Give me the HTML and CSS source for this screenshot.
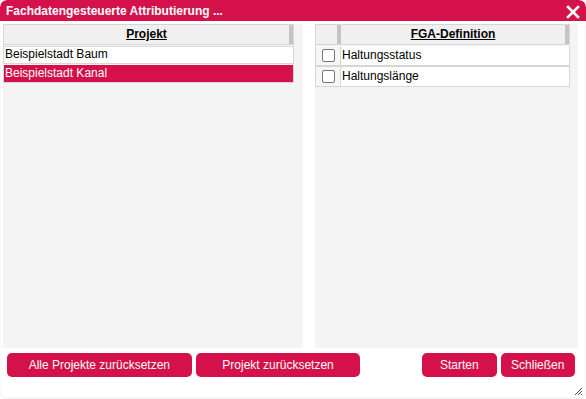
FILE: index.html
```html
<!DOCTYPE html>
<html>
<head>
<meta charset="utf-8">
<link rel="stylesheet" href="styles.css">
</head>
<body>
<div class="dialog">
  <div class="titlebar">
    <span class="title">Fachdatengesteuerte Attributierung ...</span>
    <svg class="close" width="14" height="14" viewBox="0 0 14 14"><path d="M2 2 L12 12 M12 2 L2 12" stroke="#fff" stroke-width="2.6" stroke-linecap="square"/></svg>
  </div>
  <div class="content">
    <div class="panel left">
      <div class="grid">
        <div class="head"><span class="htext">Projekt</span><span class="hbar"></span></div>
        <div class="row">Beispielstadt Baum</div>
        <div class="row sel">Beispielstadt Kanal</div>
      </div>
    </div>
    <div class="panel right">
      <div class="grid2">
        <div class="head2">
          <span class="hcheck"></span><span class="hbar"></span>
          <span class="htext">FGA-Definition</span><span class="hbar"></span>
        </div>
        <div class="row2"><span class="cb"><span class="box"></span></span><span class="lbl">Haltungsstatus</span></div>
        <div class="row2"><span class="cb"><span class="box"></span></span><span class="lbl">Haltungslänge</span></div>
      </div>
    </div>
  </div>
  <div class="buttons">
    <button class="btn b1">Alle Projekte zurücksetzen</button>
    <button class="btn b2">Projekt zurücksetzen</button>
    <span class="spacer"></span>
    <button class="btn b3">Starten</button>
    <button class="btn b4">Schließen</button>
  </div>
  <svg class="grip" width="9" height="9" viewBox="0 0 9 9"><path d="M8 1 L1 8 M8 4 L4 8 M8 7 L7 8" stroke="#444" stroke-width="1"/></svg>
</div>
</body>
</html>
```

FILE: styles.css
```css
html, body {
  margin: 0;
  padding: 0;
  background: #ffffff;
}
body {
  font-family: "Liberation Sans", Arial, sans-serif;
  font-size: 12px;
  color: #000;
}
.dialog {
  position: relative;
  width: 586px;
  height: 399px;
  background: #fff;
  border-radius: 7px;
  overflow: hidden;
  box-shadow: inset 0 -1px 2px rgba(0,0,0,0.08);
  display: flex;
  flex-direction: column;
}
.titlebar {
  height: 21px;
  background: #d4114a;
  display: flex;
  align-items: center;
  padding: 0 8px 0 6px;
  border-radius: 7px 7px 0 0;
}
.title {
  color: #fff;
  font-weight: bold;
  font-size: 12px;
  flex: 1;
  padding-top: 1px;
}
.close {
  display: block;
  margin-top: 2px;
  margin-right: -2px;
}
.content {
  display: flex;
  padding: 3px 8px 0 3px;
  gap: 12px;
  height: 324px;
}
.panel {
  background: #f4f4f4;
  height: 324px;
}
.left { width: 300px; }
.right { width: 263px; }
.grid {
  width: 291px;
}
.head, .head2 {
  height: 19px;
  background: #f0f0f0;
  border: 1px solid #d6d6d6;
  display: flex;
  align-items: stretch;
}
.htext {
  flex: 1;
  text-align: center;
  font-weight: bold;
  text-decoration: underline;
  line-height: 18px;
  font-size: 12px;
}
.hbar {
  width: 4px;
  background: #c4c4c4;
}
.row {
  height: 17px;
  line-height: 17px;
  background: #fff;
  border: 1px solid #d6d6d6;
  border-top: 0;
  padding-left: 1px;
  margin-top: 1px;
  box-shadow: 0 1px 0 #d6d6d6 inset;
}
.row.sel {
  background: #d4114a;
  color: #fff;
  box-shadow: none;
}
.grid2 {
  width: 255px;
}
.hcheck {
  width: 21px;
}
.row2 {
  display: flex;
  height: 19px;
  border: 1px solid #d6d6d6;
  border-top: 0;
  margin-top: 1px;
}
.row2 + .row2 { border-top: 1px solid #d6d6d6; margin-top: 0; }
.grid2 .head2 + .row2 { border-top: 0; }
.cb {
  width: 24px;
  border-right: 1px solid #d6d6d6;
  display: flex;
  align-items: center;
  justify-content: center;
  background: #f6f6f6;
}
.box {
  width: 11px;
  height: 11px;
  border: 1px solid #767676;
  border-radius: 2px;
  background: #fff;
}
.lbl {
  flex: 1;
  background: #fff;
  line-height: 19px;
  padding-left: 1px;
}
.buttons {
  display: flex;
  gap: 4px;
  padding: 5px 11px 0 7px;
}
.spacer { width: 54px; }
.btn {
  height: 24px;
  border: 0;
  border-radius: 5px;
  background: #d4114a;
  color: #fff;
  font-family: "Liberation Sans", Arial, sans-serif;
  font-size: 12px;
  padding: 0;
  margin: 0;
}
.b1 { width: 186px; }
.b2 { width: 166px; }
.b3 { width: 75px; }
.b4 { width: 75px; }
.grip {
  position: absolute;
  right: 3px;
  bottom: 3px;
}
```
